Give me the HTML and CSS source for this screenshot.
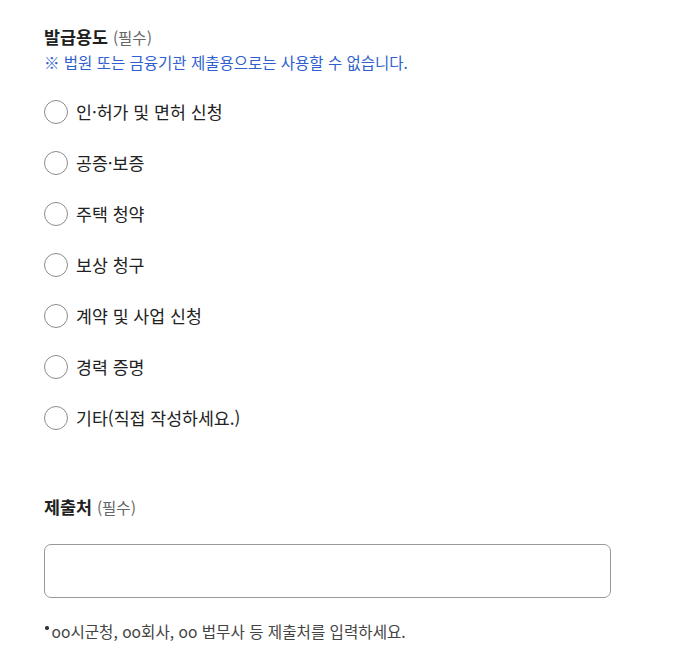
FILE: index.html
```html
<!DOCTYPE html>
<html lang="ko">
<head>
<meta charset="utf-8">
<link rel="stylesheet" href="styles.css">
</head>
<body>
<div class="wrap">
  <div class="title">발급용도 <span class="req">(필수)</span></div>
  <div class="notice">※ 법원 또는 금융기관 제출용으로는 사용할 수 없습니다.</div>
  <ul class="radios">
    <li class="radio"><span class="circle"></span><span class="label">인·허가 및 면허 신청</span></li>
    <li class="radio"><span class="circle"></span><span class="label">공증·보증</span></li>
    <li class="radio"><span class="circle"></span><span class="label">주택 청약</span></li>
    <li class="radio"><span class="circle"></span><span class="label">보상 청구</span></li>
    <li class="radio"><span class="circle"></span><span class="label">계약 및 사업 신청</span></li>
    <li class="radio"><span class="circle"></span><span class="label">경력 증명</span></li>
    <li class="radio"><span class="circle"></span><span class="label">기타(직접 작성하세요.)</span></li>
  </ul>
  <div class="title title2">제출처 <span class="req">(필수)</span></div>
  <div class="field"></div>
  <div class="hint"><span class="dot"></span>oo시군청, oo회사, oo 법무사 등 제출처를 입력하세요.</div>
</div>
</body>
</html>
```
FILE: styles.css
```css
html, body {
  margin: 0;
  padding: 0;
  background: #fff;
}
body {
  font-family: "Noto Sans CJK KR", "Noto Sans", sans-serif;
  color: #222;
}
.wrap {
  padding: 24px 0 0 44px;
  width: 567px;
}
.title {
  font-size: 17.4px;
  font-weight: 700;
  line-height: 25px;
  color: #1f1f1f;
}
.req {
  font-size: 15.5px;
  font-weight: 400;
  color: #666;
}
.notice {
  margin-top: 1px;
  font-size: 15.5px;
  line-height: 22px;
  color: #2f5fcf;
}
.radios {
  list-style: none;
  margin: 13px 0 0;
  padding: 0;
}
.radio {
  height: 51px;
  display: flex;
  align-items: center;
}
.circle {
  width: 22px;
  height: 22px;
  border: 1px solid #8c8c8c;
  border-radius: 50%;
  box-sizing: content-box;
  flex: none;
  background: #fff;
}
.label {
  margin-left: 8px;
  font-size: 17.3px;
  color: #222;
}
.title2 {
  margin-top: 51px;
}
.field {
  margin-top: 24px;
  height: 54px;
  box-sizing: border-box;
  border: 1px solid #999;
  border-radius: 7px;
  background: #fff;
}
.hint {
  margin-top: 22px;
  font-size: 15.6px;
  line-height: 22px;
  color: #444;
  display: flex;
  align-items: center;
}
.dot {
  width: 3.5px;
  height: 3.5px;
  border-radius: 50%;
  background: #333;
  margin: -6px 3px 0 1px;
  flex: none;
}
```
